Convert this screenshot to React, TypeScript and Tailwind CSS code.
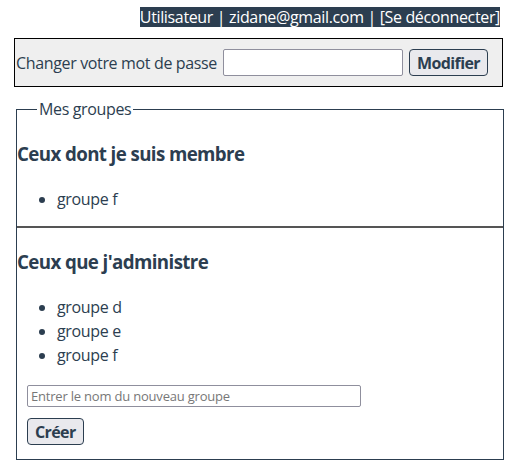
import { useState } from "react";

const membreDe = ["groupe f"];
const administre = ["groupe d", "groupe e", "groupe f"];

export default function App() {
  const [password, setPassword] = useState("");
  const [nouveauGroupe, setNouveauGroupe] = useState("");

  return (
    <div className="font-['Open_Sans',sans-serif] text-base leading-6 tracking-[-0.35px] text-[#2c3e50]">
      {/* Barre utilisateur */}
      <div className="pr-[11px] pt-[7px] text-right leading-[20px]">
        <span className="inline-block bg-[#2c3e50] leading-[20px] text-white">
          Utilisateur | zidane@gmail.com | [Se déconnecter]
        </span>
      </div>

      {/* Mot de passe */}
      <div className="mx-[14px] mr-[8px] mt-[11px] flex h-[49px] items-center border border-black bg-[#efefef] pl-px">
        <span>Changer votre mot de passe</span>
        <input
          type="password"
          value={password}
          onChange={(e) => setPassword(e.target.value)}
          className="ml-[6px] h-[27px] w-[180px] rounded-[2px] border border-[#8f8f9d] bg-white"
        />
        <button
          type="button"
          className="ml-[6px] h-[27px] rounded-[4px] border border-[#2c3e50] bg-[#e9e9ed] px-[7px] font-bold tracking-[-0.6px]"
        >
          Modifier
        </button>
      </div>

      {/* Groupes */}
      <fieldset className="ml-[16px] mr-[7px] mt-[10px] border border-[#2c3e50]">
        <legend className="ml-[20px] px-[2px]">Mes groupes</legend>

        <section>
          <h3 className="my-[18.72px] text-[18.72px] font-bold leading-[28px] tracking-[-0.6px]">
            Ceux dont je suis membre
          </h3>
          <ul className="mb-[15px] mt-[19.5px] list-disc pl-10">
            {membreDe.map((g) => (
              <li key={g}>{g}</li>
            ))}
          </ul>
        </section>

        <section className="border-t-2 border-[#555]">
          <h3 className="mb-[18.72px] mt-[19.72px] text-[18.72px] font-bold leading-[28px] tracking-[-0.6px]">
            Ceux que j'administre
          </h3>
          <ul className="mb-4 mt-[19.5px] list-disc pl-10">
            {administre.map((g) => (
              <li key={g}>{g}</li>
            ))}
          </ul>
          <div className="flex flex-col items-start pb-[14px] pl-[10px]">
            <input
              type="text"
              value={nouveauGroupe}
              onChange={(e) => setNouveauGroupe(e.target.value)}
              placeholder="Entrer le nom du nouveau groupe"
              className="mt-[2px] h-[22px] w-[334px] rounded-[2px] border border-[#8f8f9d] px-[3px] text-[13px] tracking-[-0.2px] placeholder:text-[#777]"
            />
            <button
              type="button"
              className="mt-[11px] h-[27px] rounded-[4px] border border-[#2c3e50] bg-[#e9e9ed] px-[7px] font-bold tracking-[-0.6px]"
            >
              Créer
            </button>
          </div>
        </section>
      </fieldset>
    </div>
  );
}
